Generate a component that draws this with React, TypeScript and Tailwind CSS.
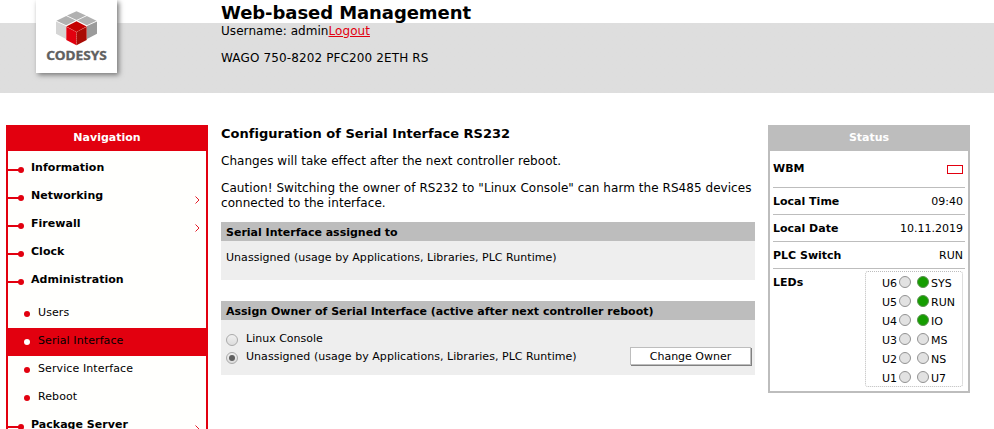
import React from "react";

const navTop = [
  { label: "Information", arrow: false },
  { label: "Networking", arrow: true },
  { label: "Firewall", arrow: true },
  { label: "Clock", arrow: false },
  { label: "Administration", arrow: false },
];

const navSub = [
  { label: "Users" },
  { label: "Serial Interface", active: true },
  { label: "Service Interface" },
  { label: "Reboot" },
];

const statusRows = [
  ["Local Time", "09:40"],
  ["Local Date", "10.11.2019"],
  ["PLC Switch", "RUN"],
];

const leds = [
  { left: "U6", right: "SYS", on: true },
  { left: "U5", right: "RUN", on: true },
  { left: "U4", right: "IO", on: true },
  { left: "U3", right: "MS", on: false },
  { left: "U2", right: "NS", on: false },
  { left: "U1", right: "U7", on: false },
];

function Logo() {
  return (
    <svg width="81" height="73" viewBox="0 0 81 73" className="block">
      <path d="M40.500 11.300 50 15.600 40.500 20 31 15.600Z" fill="#b1b1b1" />
      <path d="M30.200 16.100 39.700 20.500 30.200 25.200 20.500 20.700Z" fill="#b1b1b1" />
      <path d="M50.800 16.100 60.500 20.700 50.800 25.200 41.300 20.500Z" fill="#b1b1b1" />
      <path d="M20 21.500 30 26V39L20 33.800Z" fill="#d5d5d5" />
      <path d="M61 21.500 51 26V39L61 33.800Z" fill="#9b9b9b" />
      <path d="M40.500 21.300 50.700 26.500 40.500 32 30.300 26.500Z" fill="#c40000" />
      <path d="M30.300 26.700 40.500 32.100V45.200L30.300 40Z" fill="#e2000f" />
      <path d="M50.700 26.700 40.500 32.100V45.200L50.700 40Z" fill="#a90b05" />
      <path d="M30.500 26.500 40.500 32 50.500 26.500M40.500 32V44" fill="none" stroke="#e8766c" strokeWidth=".5" strokeDasharray="1 1" />
      <text x="10.300" y="59.700" textLength="60.500" lengthAdjust="spacingAndGlyphs" fontFamily="Noto Sans, sans-serif" fontWeight="700" fontSize="13" fill="#606060" stroke="#606060" strokeWidth=".35">CODESYS</text>
    </svg>
  );
}

function Chevron() {
  return (
    <svg width="5" height="8" viewBox="0 0 5 8" className="mt-[13px] mr-[6px] block">
      <path d="M.5 .5 4 4 .5 7.500" fill="none" stroke="#e2000f" strokeWidth=".9" />
    </svg>
  );
}

function NavItem({ label, arrow }: { label: string; arrow?: boolean }) {
  return (
    <div className="flex h-7 items-start">
      <span className="mt-[14px] h-[2px] w-[11px] bg-[#e2000f]" />
      <span className="mt-3 -ml-px size-[6px] rounded-full bg-[#e2000f]" />
      <span className="ml-[7px] grow text-[11px] leading-[26px] font-bold tracking-[0.03px]">{label}</span>
      {arrow && <Chevron />}
    </div>
  );
}

function Led({ on }: { on?: boolean }) {
  return (
    <span className={`size-3 shrink-0 rounded-full border-[1.5px] ${on ? "border-[#5b9150] bg-[#159d00]" : "border-[#929292] bg-[#e2e2e2]"}`} />
  );
}

function Radio({ checked }: { checked?: boolean }) {
  return (
    <span className="mt-[5px] flex size-3 shrink-0 items-center justify-center rounded-full border border-[#aaa] bg-linear-to-b from-[#f0f0f0] to-[#ddd]">
      {checked && <span className="size-[6px] rounded-full bg-[#606060]" />}
    </span>
  );
}

export default function App() {
  return (
    <div className="h-[429px] w-[994px] overflow-hidden bg-white font-['DejaVu_Sans',Verdana,sans-serif] text-[12px] text-black">
      <header className="flex h-[93px] bg-linear-to-b from-white from-[23px] to-[#dedede] to-[23px]">
        <div className="ml-9 h-[73px] w-[81px] bg-white shadow-[2px_2px_5px_#777]">
          <Logo />
        </div>
        <div className="ml-[104px] whitespace-nowrap">
          <h1 className="h-[23px] text-[18px] leading-[25px] font-bold tracking-[-0.07px]">Web-based Management</h1>
          <p className="leading-[17px] tracking-[0.06px]">
            Username: admin<a className="text-[#e2000f] underline">Logout</a>
          </p>
          <p className="mt-[10px] leading-[17px] tracking-[0.13px]">WAGO 750-8202 PFC200 2ETH RS</p>
        </div>
      </header>

      <div className="mt-8 flex items-start">
        <nav className="ml-[6px] h-[320px] w-[202px] border-x-2 border-[#e2000f] bg-[#fffffd]">
          <h2 className="h-[26px] bg-[#e2000f] text-center text-[11px] leading-[26px] font-bold text-white">Navigation</h2>
          <div className="mt-1">
            {navTop.map((n) => (
              <NavItem key={n.label} label={n.label} arrow={n.arrow} />
            ))}
          </div>
          <div className="mt-[5px]">
            {navSub.map((n) => (
              <div key={n.label} className={`flex h-7 items-start pl-4 ${n.active ? "bg-[#e2000f]" : ""}`}>
                <span className={`mt-[11px] size-[6px] rounded-full ${n.active ? "bg-white" : "bg-[#e2000f]"}`} />
                <span className="ml-2 text-[11px] leading-[26px] tracking-[0.1px]">{n.label}</span>
              </div>
            ))}
          </div>
          <NavItem label="Package Server" arrow />
        </nav>

        <main className="ml-[13px] w-[534px] whitespace-nowrap">
          <h2 className="text-[13px] leading-[17px] font-bold tracking-[0.02px]">Configuration of Serial Interface RS232</h2>
          <p className="mt-3 leading-[15px] tracking-[0.04px]">Changes will take effect after the next controller reboot.</p>
          <p className="mt-3 leading-[15px] tracking-[0.05px]">
            Caution! Switching the owner of RS232 to "Linux Console" can harm the RS485 devices
            <br />
            connected to the interface.
          </p>
          <section className="mt-[11px] h-[58px] bg-[#eee] text-[11px]">
            <h3 className="h-[19px] bg-[#bdbdbd] pl-[5px] leading-[22px] font-bold">Serial Interface assigned to</h3>
            <p className="pt-2 pl-[5px] leading-[18px] tracking-[0.04px]">Unassigned (usage by Applications, Libraries, PLC Runtime)</p>
          </section>
          <section className="mt-[21px] h-[74px] bg-[#eee] text-[11px]">
            <h3 className="h-[19px] bg-[#bdbdbd] pl-[5px] leading-[22px] font-bold">
              Assign Owner of Serial Interface (active after next controller reboot)
            </h3>
            <div className="flex pt-[9px] pl-[5px]">
              <div className="grow">
                <div className="flex h-[18px]">
                  <Radio />
                  <span className="ml-2 leading-5">Linux Console</span>
                </div>
                <div className="flex h-[18px]">
                  <Radio checked />
                  <span className="ml-2 leading-5 tracking-[0.04px]">Unassigned (usage by Applications, Libraries, PLC Runtime)</span>
                </div>
              </div>
              <button className="mt-[18px] mr-1 h-[18px] w-[121px] border border-t-[#bdbdbd] border-r-[#bdbdbd] border-b-[#bdbdbd] border-l-[#bdbdbd] bg-white pt-px text-[11px] leading-4 shadow-[1px_1px_0_#808080]">
                Change Owner
              </button>
            </div>
          </section>
        </main>

        <aside className="ml-[13px] h-[268px] w-[202px] border-2 border-t-0 border-[#bdbdbd] text-[11px]">
          <h2 className="h-[26px] bg-[#bdbdbd] text-center leading-[26px] font-bold text-white">Status</h2>
          <div className="mx-[3px]">
            <div className="flex h-[37px] justify-between border-b border-[#bdbdbd] pr-[2px]">
              <span className="leading-[36px] font-bold">WBM</span>
              <span className="mt-[14px] h-[9px] w-4 border border-[#e2000f]" />
            </div>
            {statusRows.map(([name, value]) => (
              <div key={name} className="flex h-[27px] justify-between border-b border-[#bdbdbd] pr-[2px] leading-[27px]">
                <span className="font-bold">{name}</span>
                <span>{value}</span>
              </div>
            ))}
            <div className="flex justify-between pr-[2px]">
              <span className="leading-[27px] font-bold">LEDs</span>
              <div className="mt-[2px] h-[116px] w-[98px] rounded-[3px] border border-dotted border-[#bdbdbd]">
                {leds.map((led) => (
                  <div key={led.left} className="flex h-[19px] items-center pl-4">
                    <span className="mt-1 w-[17px] leading-4">{led.left}</span>
                    <Led />
                    <span className="w-[6px]" />
                    <Led on={led.on} />
                    <span className="mt-1 ml-[2px] leading-4">{led.right}</span>
                  </div>
                ))}
              </div>
            </div>
          </div>
        </aside>
      </div>
    </div>
  );
}
